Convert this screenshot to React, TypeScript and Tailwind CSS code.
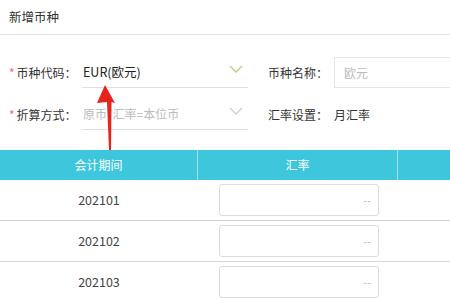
import React from "react";

const Chevron = ({ color }: { color: string }) => (
  <svg width="14" height="8" viewBox="0 0 14 8" className="block">
    <polyline points="1,1 7,7 13,1" fill="none" stroke={color} strokeWidth="1.3" />
  </svg>
);

export default function App() {
  const rows = ["202101", "202102", "202103"];
  return (
    <div
      className="relative w-[450px] h-[300px] overflow-hidden bg-white text-[12px] text-[#333]"
      style={{ fontFamily: '"Noto Sans CJK SC", "Noto Sans", sans-serif' }}
    >
      <div className="h-[35px] flex items-center pl-[9px] border-b border-[#e3e3e3] text-[12.5px]">
        新增币种
      </div>

      <div className="pt-[22px]">
        <div className="flex h-[31px]">
          <div className="w-[82px] flex items-center pl-[9px]">
            <span className="text-[#f36b6b] mr-[2px]">*</span>
            <span>币种代码：</span>
          </div>
          <div className="w-[166px] flex items-center justify-between border-b border-[#e0e0e0] pl-[1px] pr-[5px]">
            <span className="text-[12.5px] text-[#222]">EUR(欧元)</span>
            <div className="-mt-[6px]">
              <Chevron color="#b5cf7c" />
            </div>
          </div>
          <div className="w-[86px] flex items-center pl-[20px]">币种名称：</div>
          <div className="flex-1 -mr-[20px] border border-[#e6e6e6] flex items-center pl-[9px] text-[#bbb]">
            欧元
          </div>
        </div>

        <div className="flex h-[31px] mt-[11px]">
          <div className="w-[82px] flex items-center pl-[9px]">
            <span className="text-[#f36b6b] mr-[2px]">*</span>
            <span>折算方式：</span>
          </div>
          <div className="w-[166px] flex items-center justify-between border-b border-[#e0e0e0] pl-[1px] pr-[5px]">
            <span className="text-[#bbb]">原币*汇率=本位币</span>
            <div className="-mt-[6px]">
              <Chevron color="#cfcfcf" />
            </div>
          </div>
          <div className="w-[86px] flex items-center pl-[20px]">汇率设置：</div>
          <div className="flex items-center">月汇率</div>
        </div>
      </div>

      <div className="mt-[20px]">
        <div className="flex h-[30px] bg-[#3dc6dc] text-white">
          <div className="w-[198px] flex items-center justify-center border-r border-[#9fe0ea]">会计期间</div>
          <div className="w-[200px] flex items-center justify-center border-r border-[#9fe0ea]">汇率</div>
          <div className="flex-1" />
        </div>
        {rows.map((r) => (
          <div key={r} className="flex h-[41px] border-b border-[#d6d6d6]">
            <div className="w-[198px] flex items-center justify-center text-[12.5px] text-[#444]">{r}</div>
            <div className="w-[200px] flex items-center pl-[21px]">
              <div className="w-[160px] h-[32px] border border-[#dcdcdc] rounded-[3px] flex items-center justify-end pr-[7px] text-[#bbb] text-[11px]">
                --
              </div>
            </div>
            <div className="flex-1" />
          </div>
        ))}
      </div>

      <svg className="absolute left-0 top-0 pointer-events-none" width="450" height="300">
        <polygon points="105,85 115,103 111.5,102 111,150 109,150 107,102 97,103" fill="#e8231c" />
      </svg>
    </div>
  );
}
